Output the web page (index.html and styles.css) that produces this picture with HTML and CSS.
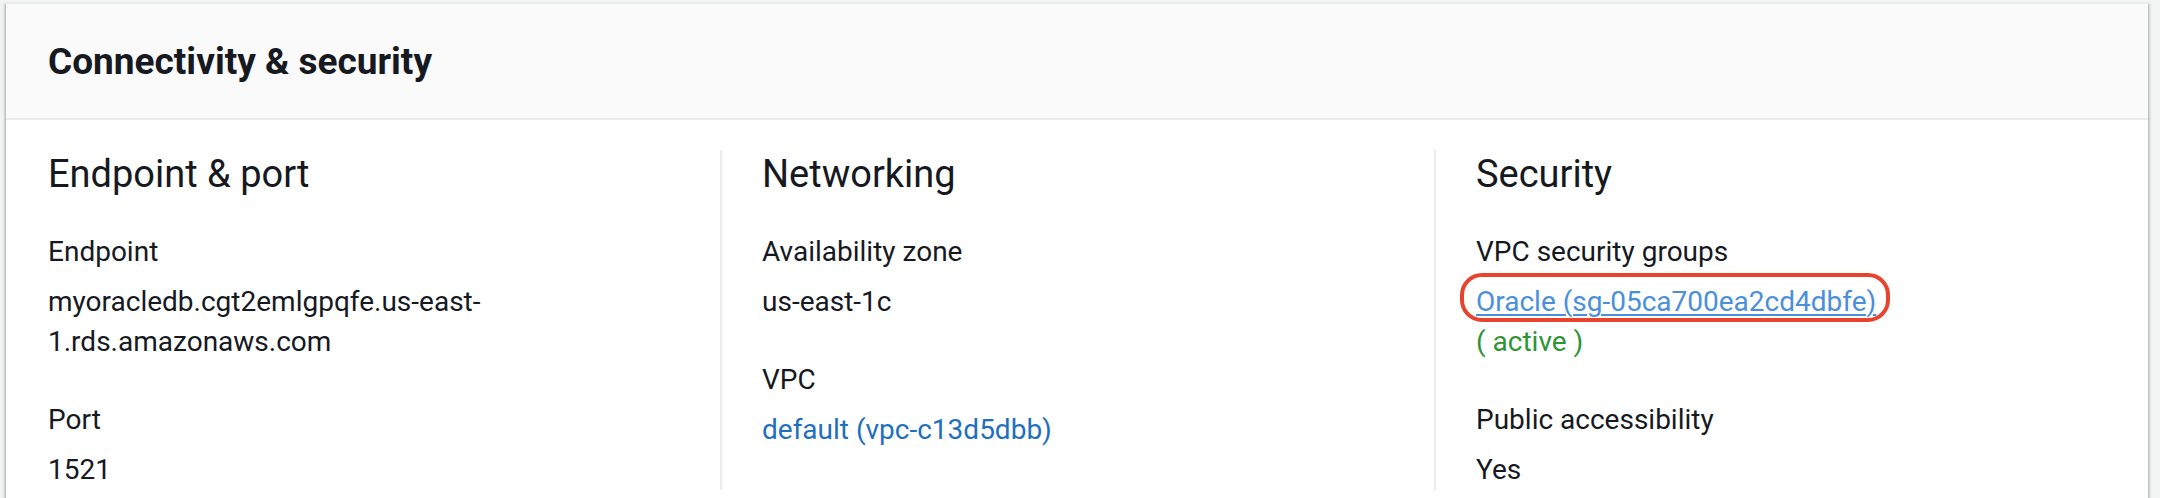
FILE: index.html
```html
<!DOCTYPE html>
<html lang="en">
<head>
<meta charset="utf-8">
<title>Connectivity &amp; security</title>
<link rel="stylesheet" href="styles.css">
</head>
<body>
<div class="card">
  <div class="card-header">
    <h2 class="card-title">Connectivity &amp; security</h2>
  </div>
  <div class="card-body">
    <div class="col">
      <h3 class="col-title">Endpoint &amp; port</h3>
      <div class="group">
        <div class="label">Endpoint</div>
        <div class="value">myoracledb.cgt2emlgpqfe.us-east-<br>1.rds.amazonaws.com</div>
      </div>
      <div class="group">
        <div class="label">Port</div>
        <div class="value">1521</div>
      </div>
    </div>
    <div class="col">
      <h3 class="col-title">Networking</h3>
      <div class="group">
        <div class="label">Availability zone</div>
        <div class="value">us-east-1c</div>
      </div>
      <div class="group">
        <div class="label">VPC</div>
        <div class="value"><a class="link" href="#">default (vpc-c13d5dbb)</a></div>
      </div>
    </div>
    <div class="col">
      <h3 class="col-title">Security</h3>
      <div class="group">
        <div class="label">VPC security groups</div>
        <div class="value">
          <span class="highlight"><a class="link link-sg" href="#">Oracle (sg-05ca700ea2cd4dbfe)</a><span class="oval"></span></span>
          <div class="status">( active )</div>
        </div>
      </div>
      <div class="group">
        <div class="label">Public accessibility</div>
        <div class="value">Yes</div>
      </div>
    </div>
  </div>
</div>
</body>
</html>
```

FILE: styles.css
```css
html, body {
  margin: 0;
  padding: 0;
}
body {
  background: #f2f3f3;
  font-family: Roboto, "Open Sans", sans-serif;
  color: #16191f;
  overflow: hidden;
  height: 498px;
}
.card {
  margin: 2px 12px 0 6px;
  background: #ffffff;
  border-top: 2px solid #eaeded;
  box-shadow: 0 2px 2px 0 rgba(0, 28, 36, 0.3), 2px 2px 2px 0 rgba(0, 28, 36, 0.15), -2px 2px 2px 0 rgba(0, 28, 36, 0.15);
}
.card-header {
  height: 114px;
  display: flex;
  align-items: center;
  padding: 0 42px;
  background: #fafafa;
  border-bottom: 2px solid #eaeded;
}
.card-title {
  margin: 2px 0 0 0;
  font-size: 37px;
  font-weight: 700;
  line-height: 44px;
  color: #16191f;
}
.card-body {
  display: grid;
  grid-template-columns: repeat(3, 1fr);
  column-gap: 84px;
  padding: 30px 42px 80px 42px;
}
.col {
  display: flex;
  flex-direction: column;
  gap: 38px;
}
.col + .col {
  border-left: 2px solid #eaeded;
  padding-left: 40px;
  margin-left: -42px;
}
.col-title {
  margin: 0 0 -4px 0;
  font-size: 38px;
  font-weight: 400;
  line-height: 48px;
  color: #16191f;
}
.group {
  display: flex;
  flex-direction: column;
  gap: 10px;
}
.label,
.value {
  font-size: 28px;
  line-height: 40px;
  color: #16191f;
}
.link {
  color: #1f6fbf;
  text-decoration: none;
}
.link-sg {
  color: #4a8fdc;
  text-decoration: underline;
  text-decoration-thickness: 2px;
  text-underline-offset: 3px;
}
.highlight {
  position: relative;
  display: inline-block;
}
.oval {
  position: absolute;
  left: -16px;
  right: -14px;
  top: -9px;
  bottom: 0;
  border: 4px solid #e8432d;
  border-radius: 22px;
}
.status {
  color: #2e9535;
}
```
